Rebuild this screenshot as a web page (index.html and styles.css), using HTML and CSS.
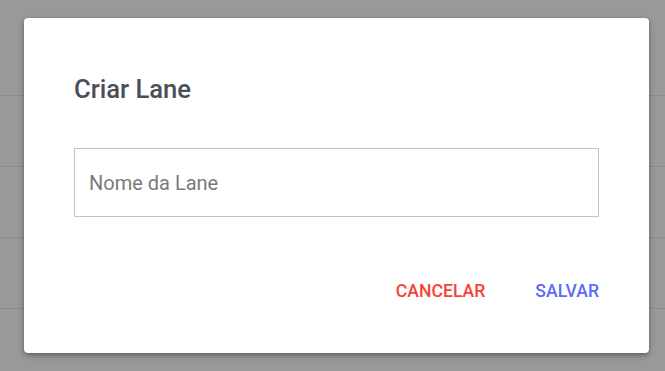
FILE: index.html
```html
<!DOCTYPE html>
<html lang="pt">
<head>
<meta charset="utf-8">
<link rel="stylesheet" href="styles.css">
</head>
<body>
<div class="backdrop">
  <div class="row r1"></div>
  <div class="row"></div>
  <div class="row"></div>
  <div class="row"></div>
</div>
<div class="dialog">
  <h2 class="title">Criar Lane</h2>
  <div class="field">
    <input class="input" type="text" placeholder="Nome da Lane">
  </div>
  <div class="actions">
    <button class="btn btn-cancel">CANCELAR</button>
    <button class="btn btn-save">SALVAR</button>
  </div>
</div>
</body>
</html>
```
FILE: styles.css
```css
* { box-sizing: border-box; }
html, body { margin: 0; padding: 0; }
body {
  width: 665px;
  height: 371px;
  overflow: hidden;
  background: #999999;
  font-family: Roboto, "Liberation Sans", sans-serif;
  position: relative;
}
.backdrop { display: flex; flex-direction: column; }
.row {
  height: 71px;
  border-bottom: 1px solid #8c8c8c;
}
.row.r1 { height: 96px; }
.dialog {
  position: absolute;
  left: 24px;
  top: 18px;
  width: 625px;
  height: 335px;
  background: #fff;
  border-radius: 4px;
  box-shadow: 0 3px 6px rgba(0,0,0,0.25), 0 1px 3px rgba(0,0,0,0.2);
  padding: 56px 50px 0 50px;
  display: flex;
  flex-direction: column;
}
.title {
  margin: 0;
  font-size: 25.6px;
  font-weight: 500;
  line-height: 30px;
  color: #4a4f57;
}
.field { margin-top: 44px; }
.input {
  display: block;
  width: 525px;
  height: 69px;
  border: 1px solid #c4c4c4;
  border-radius: 0;
  padding: 0 14px;
  font-family: Roboto, "Liberation Sans", sans-serif;
  font-size: 20px;
  color: #333;
  outline: none;
}
.input::placeholder { color: #7a7a7a; }
.actions {
  margin-top: 64px;
  display: flex;
  justify-content: flex-end;
  gap: 50px;
}
.btn {
  background: none;
  border: 0;
  padding: 0;
  font-family: Roboto, "Liberation Sans", sans-serif;
  font-size: 17.6px;
  font-weight: 500;
  line-height: 21px;
  cursor: pointer;
}
.btn-cancel { color: #f44336; }
.btn-save { color: #5c6bf7; }
```
